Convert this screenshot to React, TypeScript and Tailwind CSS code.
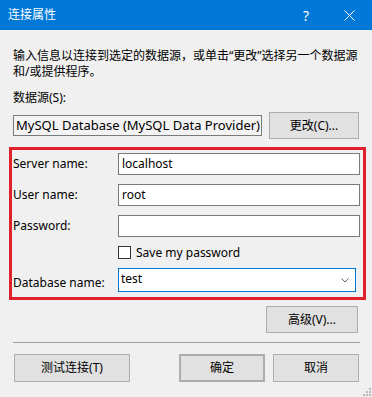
import React from 'react'

const font = { fontFamily: '"Noto Sans", "Noto Sans CJK SC", sans-serif' }

function Btn({ children, className = '' }: { children: React.ReactNode; className?: string }) {
    return (
        <div className={`h-[27px] flex items-center justify-center bg-[#e1e1e1] border border-[#adadad] text-[12px] text-black ${className}`}>
            {children}
        </div>
    )
}

function Field({ label, value }: { label: string; value?: string }) {
    return (
        <div className="flex items-center h-[22px]">
            <div className="w-[106px] pl-[1px] text-[12px]">{label}</div>
            <div className="w-[242px] h-[22px] bg-white border border-[#7a7a7a] flex items-center px-[3px] text-[12px]">
                {value}
            </div>
        </div>
    )
}

export default function App() {
    return (
        <div className="relative w-[372px] h-[397px] bg-[#f0f0f0] overflow-hidden text-black" style={font}>
            {/* Title bar */}
            <div className="h-[30px] bg-[#0078d7] flex items-center text-white">
                <span className="pl-[8px] text-[12px] flex-1">连接属性</span>
                <span className="text-[14px] w-[20px] text-center mr-[28px]">?</span>
                <svg width="11" height="11" viewBox="0 0 11 11" className="mr-[17px]">
                    <path d="M0.5 0.5 L10.5 10.5 M10.5 0.5 L0.5 10.5" stroke="white" strokeWidth="1" />
                </svg>
            </div>

            {/* Body */}
            <div className="px-[13px] pt-[18px]">
                <p className="text-[12px] leading-[16px] whitespace-nowrap">
                    输入信息以连接到选定的数据源，或单击“更改”选择另一个数据源
                    <br />
                    和/或提供程序。
                </p>
                <p className="mt-[10px] text-[12px] leading-[16px]">数据源(S):</p>

                <div className="mt-[6px] flex items-center justify-between">
                    <div className="w-[249px] h-[21px] border border-[#7a7a7a] bg-[#f3f3f3] flex items-center px-[2px] text-[13px] whitespace-nowrap overflow-hidden">
                        MySQL Database (MySQL Data Provider)
                    </div>
                    <Btn className="w-[90px]">更改(C)...</Btn>
                </div>

                {/* Highlighted connection fields */}
                <div className="mt-[8px] -ml-[4px] w-[357px] border-[3px] border-[#e0202b] pt-[3px] pb-[5px] flex flex-col gap-[9px]">
                    <Field label="Server name:" value="localhost" />
                    <Field label="User name:" value="root" />
                    <Field label="Password:" />
                    <div className="flex items-center h-[13px]">
                        <div className="w-[106px]" />
                        <div className="w-[13px] h-[13px] bg-white border border-[#333333]" />
                        <span className="ml-[5px] text-[12px]">Save my password</span>
                    </div>
                    <div className="flex items-center h-[24px]">
                        <div className="w-[106px] pl-[1px] pt-[5px] text-[12px]">Database name:</div>
                        <div className="w-[238px] h-[24px] bg-white border border-[#0078d7] flex items-center justify-between pl-[2px] pr-[6px] text-[12px]">
                            <span className="-mt-[3px]">test</span>
                            <svg width="8" height="5" viewBox="0 0 8 5">
                                <path d="M0.5 0.5 L4 4 L7.5 0.5" stroke="#606060" fill="none" strokeWidth="1" />
                            </svg>
                        </div>
                    </div>
                </div>

                <div className="mt-[6px] flex justify-end">
                    <Btn className="w-[92px] mr-[1px]">高级(V)...</Btn>
                </div>

                <div className="mt-[9px] h-px bg-[#a0a0a0] mr-[-1px]" />

                <div className="mt-[11px] flex items-center">
                    <Btn className="w-[116px] h-[28px] ml-[1px]">测试连接(T)</Btn>
                    <div className="flex-1" />
                    <Btn className="w-[86px] h-[28px] border-2 border-[#0078d7]">确定</Btn>
                    <Btn className="w-[86px] h-[28px] ml-[8px]">取消</Btn>
                </div>
            </div>

            {/* Resize grip */}
            <svg width="10" height="10" viewBox="0 0 10 10" className="absolute right-0 bottom-0">
                <rect x="7" y="1" width="2" height="2" fill="#b8b8b8" />
                <rect x="4" y="4" width="2" height="2" fill="#b8b8b8" />
                <rect x="7" y="4" width="2" height="2" fill="#b8b8b8" />
                <rect x="1" y="7" width="2" height="2" fill="#b8b8b8" />
                <rect x="4" y="7" width="2" height="2" fill="#b8b8b8" />
                <rect x="7" y="7" width="2" height="2" fill="#b8b8b8" />
            </svg>
        </div>
    )
}
